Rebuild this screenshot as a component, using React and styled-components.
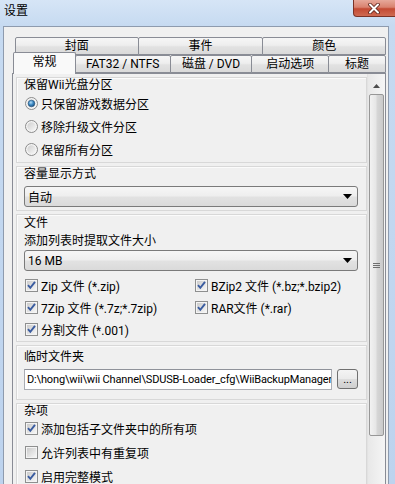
import React from 'react';
import styled, { createGlobalStyle } from 'styled-components';

const GlobalStyle = createGlobalStyle`
  html, body {
    margin: 0;
    padding: 0;
    width: 395px;
    height: 484px;
    overflow: hidden;
  }
  body {
    font-family: Roboto, "Noto Sans CJK SC", sans-serif;
    font-size: 12px;
    color: #000;
  }
`;

const Window = styled.div`
    width: 395px;
    height: 484px;
    display: flex;
    flex-direction: column;
    background: linear-gradient(180deg, #d6e5f6 0px, #c6daf1 26px, #bdd3ee 100%);
    overflow: hidden;
`;

const TitleBar = styled.div`
    height: 26px;
    flex: none;
    display: flex;
    align-items: flex-start;
    justify-content: space-between;
`;

const Title = styled.div`
    padding: 3px 0 0 4px;
    line-height: 16px;
    font-size: 12px;
`;

const CloseButton = styled.div`
    width: 48px;
    height: 17px;
    margin-right: -6px;
    box-sizing: border-box;
    border: 1px solid #7a3226;
    border-top: none;
    border-radius: 0 0 0 4px;
    background: linear-gradient(180deg, #e6a89a 0%, #d9826f 45%, #c34a33 55%, #cf6a52 100%);
    display: flex;
    align-items: center;
    justify-content: center;
    padding-right: 6px;
`;

const Client = styled.div`
    flex: 1;
    margin-left: 3px;
    width: 386px;
    box-sizing: border-box;
    background: #f0f0f0;
    border: 1px solid #8e9bae;
    border-bottom: none;
    padding: 10px 2px 0 8px;
    display: flex;
    flex-direction: column;
    min-height: 0;
`;

const TabRow = styled.div`
    display: flex;
    align-items: flex-end;
    height: 18px;
    padding-left: ${p => p.$indent}px;
    flex: none;
`;

const Tab = styled.div`
    width: ${p => p.$w}px;
    height: ${p => (p.$active ? 22 : 18)}px;
    box-sizing: border-box;
    margin-left: -1px;
    margin-bottom: ${p => (p.$active ? -1 : 0)}px;
    position: relative;
    z-index: ${p => (p.$active ? 2 : 1)};
    border: 1px solid #898c95;
    border-bottom: ${p => (p.$active ? 'none' : '1px solid #898c95')};
    border-radius: 2px 2px 0 0;
    background: ${p => (p.$active
        ? '#f9f9f9'
        : 'linear-gradient(180deg, #f6f6f6 0%, #eeeeee 45%, #e2e2e2 55%, #dadada 100%)')};
    display: flex;
    align-items: center;
    justify-content: center;
    padding-bottom: ${p => (p.$active ? 3 : 0)}px;
    font-size: 12px;
    line-height: 14px;
    white-space: nowrap;
`;

const Panel = styled.div`
    flex: 1;
    display: flex;
    min-height: 0;
    border: 1px solid #898c95;
    border-bottom: none;
    background: #f0f0f0;
`;

const Content = styled.div`
    flex: 1;
    padding: 3px 0 0 3px;
    display: flex;
    flex-direction: column;
    gap: 3px;
    overflow: hidden;
`;

const Section = styled.div`
    flex: none;
    border: 1px solid #d8d8d8;
    box-shadow: inset 1px 1px 0 #fbfbfb;
    padding: ${p => p.$pad || '0 8px 3px 7px'};
    display: flex;
    flex-direction: column;
`;

const Label = styled.div`
    height: ${p => p.$h || 15}px;
    line-height: ${p => p.$h || 15}px;
    margin-top: ${p => p.$mt || 0}px;
    margin-bottom: ${p => p.$mb || 0}px;
    white-space: nowrap;
`;

const OptionRow = styled.div`
    display: flex;
    align-items: center;
    gap: 3px;
    height: ${p => p.$h || 23}px;
    padding-left: 1px;
    white-space: nowrap;
`;

const CheckGrid = styled.div`
    display: grid;
    grid-template-columns: 170px 1fr;
    margin-top: ${p => p.$mt || 0}px;
`;

const Select = styled.div`
    height: 21px;
    margin-top: ${p => p.$mt || 0}px;
    box-sizing: border-box;
    border: 1px solid #7a7a7a;
    border-radius: 3px;
    background: linear-gradient(180deg, #f6f6f6 0%, #eeeeee 48%, #e2e2e2 52%, #dadada 100%);
    display: flex;
    align-items: center;
    justify-content: space-between;
    padding: 0 5px 0 3px;
`;

const PathRow = styled.div`
    display: flex;
    gap: 5px;
    margin-top: ${p => p.$mt || 0}px;
`;

const PathInput = styled.div`
    width: 309px;
    height: 21px;
    box-sizing: border-box;
    border: 1px solid #abadb3;
    border-top-color: #8f929a;
    background: #fff;
    padding: 0 0 0 2px;
    font-size: 11px;
    letter-spacing: -0.15px;
    line-height: 19px;
    white-space: nowrap;
    overflow: hidden;
`;

const SmallButton = styled.div`
    width: 21px;
    height: 20px;
    box-sizing: border-box;
    border: 1px solid #707070;
    border-radius: 3px;
    background: linear-gradient(180deg, #f4f4f4 0%, #ebebeb 48%, #dddddd 52%, #cfcfcf 100%);
    display: flex;
    align-items: center;
    justify-content: center;
    font-size: 11px;
    line-height: 12px;
    padding-top: 2px;
`;

const ScrollBar = styled.div`
    width: 17px;
    flex: none;
    display: flex;
    flex-direction: column;
    align-items: center;
    background: linear-gradient(90deg, #e8e8e8 0%, #f5f5f5 100%);
    border-left: 1px solid #e2e2e2;
`;

const ArrowBox = styled.div`
    height: 17px;
    width: 100%;
    display: flex;
    align-items: center;
    justify-content: center;
    margin-top: 3px;
`;

const Thumb = styled.div`
    width: 15px;
    height: 342px;
    box-sizing: border-box;
    border: 1px solid #979797;
    border-radius: 2px;
    background: linear-gradient(90deg, #f2f2f2 0%, #e6e6e6 45%, #d6d6d6 55%, #cacaca 100%);
    display: flex;
    align-items: center;
    justify-content: center;
`;

const Radio = ({checked}) => (
    <svg width="13" height="13" viewBox="0 0 13 13">
        <defs>
            <linearGradient id="rg" x1="0" y1="0" x2="1" y2="1">
                <stop offset="0" stopColor="#cfcfcf" />
                <stop offset="1" stopColor="#f7f7f7" />
            </linearGradient>
            <radialGradient id="rd" cx="0.4" cy="0.35" r="0.7">
                <stop offset="0" stopColor="#b6dcf5" />
                <stop offset="0.5" stopColor="#3c8ac5" />
                <stop offset="1" stopColor="#1c4a78" />
            </radialGradient>
        </defs>
        <circle cx="6.5" cy="6.5" r="6" fill="#f4f4f4" stroke="#8b8b8b" />
        <circle cx="6.5" cy="6.5" r="4.2" fill="url(#rg)" />
        {checked && <circle cx="6.5" cy="6.5" r="3.3" fill="url(#rd)" stroke="#245179" strokeWidth="0.6" />}
    </svg>
);

const Check = ({checked}) => (
    <svg width="13" height="13" viewBox="0 0 13 13">
        <defs>
            <linearGradient id="cg" x1="0" y1="0" x2="1" y2="1">
                <stop offset="0" stopColor="#cbcbcb" />
                <stop offset="1" stopColor="#f6f6f6" />
            </linearGradient>
        </defs>
        <rect x="0.5" y="0.5" width="12" height="12" fill="#f4f4f4" stroke="#8e8f8f" />
        <rect x="2" y="2" width="9" height="9" fill="url(#cg)" />
        {checked && <path d="M3 6.2 L5.3 8.8 L10 2.8" fill="none" stroke="#3a5ca0" strokeWidth="1.9" />}
    </svg>
);

const DownArrow = () => (
    <svg width="9" height="5" viewBox="0 0 9 5">
        <path d="M0 0 H9 L4.5 5 Z" fill="#000" />
    </svg>
);

const Option = ({type, checked, children, h}) => (
    <OptionRow $h={h}>
        {type === 'radio' ? <Radio checked={checked} /> : <Check checked={checked} />}
        <span>{children}</span>
    </OptionRow>
);

const topTabs = [['封面', 124], ['事件', 126], ['颜色', 124]];
const bottomTabs = [['常规', 63, true], ['FAT32 / NTFS', 96], ['磁盘 / DVD', 83], ['启动选项', 78], ['标题', 58]];

class App extends React.Component {
    render() {
        return (
            <>
                <GlobalStyle />
                <Window>
                    <TitleBar>
                        <Title>设置</Title>
                        <CloseButton>
                            <svg width="14" height="11" viewBox="0 0 14 11">
                                <path d="M3 1.5 L11 9.5 M11 1.5 L3 9.5" stroke="#5a2219" strokeWidth="3.6" strokeLinecap="round" />
                                <path d="M3 1.5 L11 9.5 M11 1.5 L3 9.5" stroke="#ffffff" strokeWidth="2" strokeLinecap="round" />
                            </svg>
                        </CloseButton>
                    </TitleBar>
                    <Client>
                        <TabRow $indent={4}>
                            {topTabs.map(([t, w]) => <Tab key={t} $w={w}>{t}</Tab>)}
                        </TabRow>
                        <TabRow $indent={2}>
                            {bottomTabs.map(([t, w, a]) => <Tab key={t} $w={w} $active={a}>{t}</Tab>)}
                        </TabRow>
                        <Panel>
                            <Content>
                                <Section $pad="0 8px 1px 7px">
                                    <Label $h={14}>保留Wii光盘分区</Label>
                                    <Option type="radio" checked>只保留游戏数据分区</Option>
                                    <Option type="radio">移除升级文件分区</Option>
                                    <Option type="radio">保留所有分区</Option>
                                </Section>
                                <Section>
                                    <Label $h={14}>容量显示方式</Label>
                                    <Select $mt={5}><span>自动</span><DownArrow /></Select>
                                </Section>
                                <Section $pad="0 8px 1px 7px">
                                    <Label $h={14} $mt={1}>文件</Label>
                                    <Label $h={14} $mt={4}>添加列表时提取文件大小</Label>
                                    <Select $mt={2}><span>16 MB</span><DownArrow /></Select>
                                    <CheckGrid $mt={3}>
                                        <Option checked h={22}>Zip 文件 (*.zip)</Option>
                                        <Option checked h={22}>BZip2 文件 (*.bz;*.bzip2)</Option>
                                        <Option checked h={22}>7Zip 文件 (*.7z;*.7zip)</Option>
                                        <Option checked h={22}>RAR文件 (*.rar)</Option>
                                        <Option checked h={22}>分割文件 (*.001)</Option>
                                    </CheckGrid>
                                </Section>
                                <Section $pad="0 8px 9px 7px">
                                    <Label $h={14} $mt={4}>临时文件夹</Label>
                                    <PathRow $mt={5}>
                                        <PathInput>D:\hong\wii\wii Channel\SDUSB-Loader_cfg\WiiBackupManager(</PathInput>
                                        <SmallButton>...</SmallButton>
                                    </PathRow>
                                </Section>
                                <Section>
                                    <Label $h={14} $mb={-2}>杂项</Label>
                                    <Option checked h={24}>添加包括子文件夹中的所有项</Option>
                                    <Option h={24}>允许列表中有重复项</Option>
                                    <Option checked h={24}>启用完整模式</Option>
                                </Section>
                            </Content>
                            <ScrollBar>
                                <ArrowBox>
                                    <svg width="7" height="4" viewBox="0 0 7 4"><path d="M0 4 H7 L3.5 0 Z" fill="#4d4d4d" /></svg>
                                </ArrowBox>
                                <Thumb>
                                    <svg width="7" height="7" viewBox="0 0 7 7">
                                        <path d="M0 1.5 H7 M0 3.5 H7 M0 5.5 H7" stroke="#6f6f6f" strokeWidth="1" />
                                    </svg>
                                </Thumb>
                            </ScrollBar>
                        </Panel>
                    </Client>
                </Window>
            </>
        );
    }
}

export default App;
